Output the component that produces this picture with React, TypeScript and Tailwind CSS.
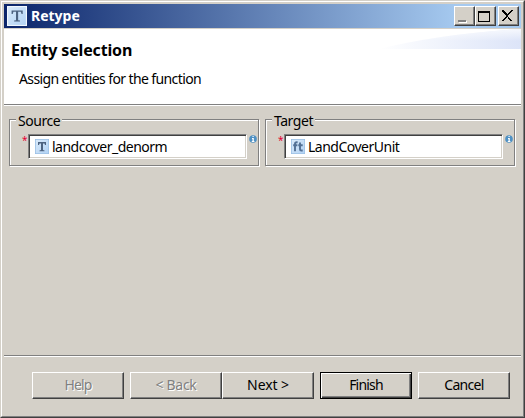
import type { ReactNode } from "react";

const raised =
  "border border-t-white border-l-white border-r-[#404040] border-b-[#404040] bg-[#d4d0c8] shadow-[inset_-1px_-1px_0_#808080]";

function EntityIcon({ kind, large = false }: { kind: "T" | "ft"; large?: boolean }) {
  return (
    <svg
      className={large ? "h-5 w-5 shrink-0" : "h-[15px] w-[14px] shrink-0"}
      viewBox="0 0 14 15"
      preserveAspectRatio="none"
    >
      <defs>
        <linearGradient id="tile" x1="0" y1="0" x2="1" y2="1">
          <stop offset="0" stopColor="#d9eafa" />
          <stop offset="1" stopColor="#b2d2f4" />
        </linearGradient>
      </defs>
      <rect x=".4" y=".4" width="13.2" height="14.2" fill="url(#tile)" stroke={large ? "#f1f7fd" : "#98bee5"} strokeWidth=".8" />
      {kind === "T" ? (
        <path
          d={
            large
              ? "M3.2 3.4h7.8v2.6h-.8l-.5-1.6H7.8v6.2l1.3.3v.7H5v-.7l1.3-.3V4.4H4.5L4 6h-.8z"
              : "M3 3h8v3h-1L9.5 4.4H8V11l1.5.4v.8h-5v-.8L6 11V4.4H4.5L4 6H3z"
          }
          fill="#4d6380"
        />
      ) : (
        <path d="M6.6 3.2H5.7Q4 3.2 4 5v7.2M2.2 6.2h4.2M9 3.5v6.7q0 1.3 1.3 1.3h1.4M7.3 6.2h4.4" fill="none" stroke="#527095" strokeWidth="1.9" />
      )}
    </svg>
  );
}

function InfoIcon() {
  return (
    <svg className="mt-px h-[8px] w-[8px]" viewBox="0 0 8 8">
      <circle cx="4" cy="4" r="3.8" fill="#4f91c4" />
      <path d="M3.5 1h1.2v1H3.5zM3 3h1.8v3h.6v1H2.8V6h.7V4H3z" fill="#fff" />
    </svg>
  );
}

function EntityGroup({ label, kind, value }: { label: string; kind: "T" | "ft"; value: string }) {
  return (
    <div className="relative h-[47px] w-[250px] border border-[#808080] shadow-[1px_1px_0_#fff,inset_1px_1px_0_#fff]">
      <span className="absolute -top-[8px] left-[6px] h-[18px] bg-[#d4d0c8] px-[2px] leading-[18px] tracking-[-0.45px]">{label}</span>
      <div className="flex pt-[14px] pl-[11px]">
        <span className="mt-px w-[7px] pl-px text-[10px] leading-[11px] text-[#e80034]">*</span>
        <div className="flex h-[25px] w-[219px] items-center border border-t-[#808080] border-l-[#808080] border-r-white border-b-white bg-white pl-[6px] shadow-[inset_1px_1px_0_#404040,inset_-1px_-1px_0_#d4d0c8]">
          <EntityIcon kind={kind} />
          <span className="ml-[3px] leading-[20px] tracking-[-0.5px]">{value}</span>
        </div>
        <div className="ml-[2px]"><InfoIcon /></div>
      </div>
    </div>
  );
}

function Button({ children, disabled = false, primary = false, className = "" }: {
  children: ReactNode; disabled?: boolean; primary?: boolean; className?: string;
}) {
  return (
    <button
      disabled={disabled}
      className={`flex h-[27px] w-[92px] items-center justify-center pb-[2px] ${
        primary
          ? "border border-black bg-[#d4d0c8] shadow-[inset_1px_1px_0_#fff,inset_-1px_-1px_0_#404040,inset_-2px_-2px_0_#808080]"
          : raised
      } ${disabled ? "text-[#808080] [text-shadow:1px_1px_0_#fff]" : "text-black"} ${className}`}
    >
      {children}
    </button>
  );
}

function CaptionButton({ children, className = "" }: { children: ReactNode; className?: string }) {
  return (
    <button className={`h-5 w-[21px] ${raised} ${className}`}>
      <svg className="h-[18px] w-[19px]" viewBox="0 0 19 18" shapeRendering="crispEdges">{children}</svg>
    </button>
  );
}

export default function App() {
  return (
    <div className="h-[418px] w-[525px] overflow-hidden border border-t-[#d4d0c8] border-l-[#d4d0c8] border-r-[#404040] border-b-[#404040] bg-[#d4d0c8] font-['Noto_Sans',sans-serif] text-[14px] text-black">
      <div className="flex h-full flex-col border border-t-white border-l-white border-r-[#808080] border-b-[#808080] p-[2px]">
        <header className="flex h-6 shrink-0 items-center bg-linear-to-r/srgb from-[#0a246a] to-[#a6caf0] to-[88%] pr-[2px] pl-[3px]">
          <EntityIcon kind="T" large />
          <span className="ml-[4px] text-[14px] leading-6 font-bold text-white">Retype</span>
          <div className="ml-auto flex">
            <CaptionButton>
              <path d="M4 14h8v2H4z" fill="#fff" /><path d="M3 13h8v2H3z" fill="#808080" />
            </CaptionButton>
            <CaptionButton>
              <path d="M2 4h12v11H2zM3 6v8h10V6z" fill="#000" fillRule="evenodd" />
            </CaptionButton>
            <CaptionButton className="ml-[2px]">
              <path d="M3 3h2v1h1v1h1v1h1v1h1V6h1V5h1V4h1V3h2v1h-1v1h-1v1h-1v1h-1v1h-1v2h1v1h1v1h1v1h1v1h-2v-1h-1v-1h-1v-1H9v-1H8v1H7v1H6v1H5v1H3v-1h1v-1h1v-1h1v-1h1V8H6V7H5V6H4V5H3z" fill="#000" />
            </CaptionButton>
          </div>
        </header>
        <section className="relative mt-px h-[77px] shrink-0 border-b border-white bg-white shadow-[inset_0_-1px_0_#808080]">
          <svg className="absolute top-0 right-0 h-5 w-[142px]" viewBox="0 0 142 20">
            <defs>
              <linearGradient id="wash"><stop stopColor="#fff" /><stop offset="1" stopColor="#dce4f8" /></linearGradient>
              <linearGradient id="lift" x1="0" y1="0" x2="0" y2="1"><stop stopColor="#fff" stopOpacity=".75" /><stop offset=".6" stopColor="#fff" stopOpacity="0" /></linearGradient>
            </defs>
            <path d="M0 20Q60 5 142 0v20z" fill="url(#wash)" />
            <path d="M0 20Q60 5 142 0v20z" fill="url(#lift)" />
          </svg>
          <h1 className="absolute top-[9px] left-[7px] text-[16px] leading-6 font-bold whitespace-nowrap tracking-[-0.15px]">Entity selection</h1>
          <p className="absolute top-[40px] left-[15px] leading-5 whitespace-nowrap tracking-[-0.61px]">Assign entities for the function</p>
        </section>
        <main className="flex flex-1 gap-[6px] pt-[13px] pl-[5px]">
          <EntityGroup label="Source" kind="T" value="landcover_denorm" />
          <EntityGroup label="Target" kind="ft" value="LandCoverUnit" />
        </main>
        <footer className="h-[59px] shrink-0 border-t border-[#808080] shadow-[inset_0_1px_0_#fff]">
          <div className="flex pt-[16px] pl-[28px]">
            <Button disabled className="tracking-[-0.9px]">Help</Button>
            <Button disabled className="ml-[6px] tracking-[-0.3px]">&lt; Back</Button>
            <Button className="tracking-[-0.1px]">Next &gt;</Button>
            <Button primary className="ml-[6px] tracking-[-0.8px]">Finish</Button>
            <Button className="ml-[6px] tracking-[-0.7px]">Cancel</Button>
          </div>
        </footer>
      </div>
    </div>
  );
}
